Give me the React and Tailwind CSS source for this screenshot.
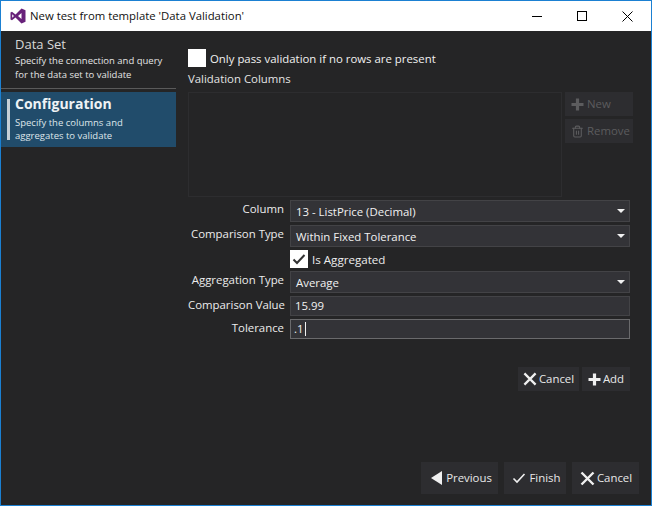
import React from 'react';
import { Trash2 } from 'lucide-react';

const font = { fontFamily: '"Open Sans", "Noto Sans", sans-serif' };

const XIcon = ({ size = 15 }) => (
  <svg width={size} height={size} viewBox="0 0 15 15" className="shrink-0">
    <path d="M1.5 1.5 L13.5 13.5 M13.5 1.5 L1.5 13.5" stroke="#f0f0f0" strokeWidth="2.4" fill="none" />
  </svg>
);

const PlusIcon = ({ color = '#f0f0f0' }) => (
  <svg width="13" height="13" viewBox="0 0 13 13" className="shrink-0">
    <path d="M6.5 0.5 V12.5 M0.5 6.5 H12.5" stroke={color} strokeWidth="3.2" fill="none" />
  </svg>
);

const Check = ({ size = 14, color = '#333', width = 2 }) => (
  <svg width={size} height={size} viewBox="0 0 14 14" className="shrink-0">
    <path d="M1.5 7.5 L5 11 L12.5 3" stroke={color} strokeWidth={width} fill="none" />
  </svg>
);

function FormRow({ label, input = false, className = '', children }) {
  return (
    <div className={`flex items-center ${className}`}>
      <div className={`w-[96px] shrink-0 whitespace-nowrap text-right text-[11.4px] text-[#ececec] ${input ? '-mt-[3px]' : '-mt-[5px]'}`}>{label}</div>
      <div className="ml-[6px] flex-1">{children}</div>
    </div>
  );
}

function Select({ value }) {
  return (
    <div className="flex h-[22px] items-center justify-between border border-[#434346] bg-[#333337] pl-[5px] pr-[3px] text-[11.4px] text-[#f1f1f1]">
      <span className="pt-[1px]">{value}</span>
      <div className="mr-[1px] h-0 w-0 border-x-[4px] border-t-[4px] border-x-transparent border-t-[#f1f1f1]" />
    </div>
  );
}

function ActionButton({ icon, label, className = '' }) {
  return (
    <div className={`flex items-center justify-center gap-[2px] bg-[#2d2d30] text-[11.4px] text-[#e8e8e8] ${className}`}>
      {icon}
      <span>{label}</span>
    </div>
  );
}

export default function App() {
  return (
    <div className="flex h-[506px] w-[652px] flex-col overflow-hidden border border-[#1b80d2] bg-[#252526]" style={font}>
      {/* Title bar */}
      <div className="flex h-[30px] shrink-0 items-center bg-white">
        <svg width="16" height="16" viewBox="0 0 16 16" className="ml-[9px] shrink-0">
          <path d="M11.5 0.5 L15.5 2.2 V13.8 L11.5 15.5 L5.5 9.6 L2 12.3 L0.5 11.5 V4.5 L2 3.7 L5.5 6.4 Z M11.5 5 L8 8 L11.5 11 Z M2.2 6.2 V9.8 L4 8 Z" fill="#68217a" fillRule="evenodd" />
        </svg>
        <span className="ml-[4px] text-[11.35px] text-[#111]">New test from template 'Data Validation'</span>
        <div className="ml-auto flex items-center">
          <div className="mr-[35px] h-[1px] w-[10px] bg-black" />
          <div className="mr-[35px] h-[10px] w-[10px] border border-black" />
          <svg width="11" height="11" viewBox="0 0 11 11" className="mr-[18px]">
            <path d="M0.5 0.5 L10.5 10.5 M10.5 0.5 L0.5 10.5" stroke="#000" fill="none" />
          </svg>
        </div>
      </div>

      <div className="flex min-h-0 flex-1">
        {/* Wizard steps */}
        <div className="w-[175px] shrink-0">
          <div className="h-[58px] border-b border-[#5a5a5a] pl-[14px] pt-[4px]">
            <div className="text-[13px] leading-[18px] text-[#d8d8d8]">Data Set</div>
            <div className="mt-[1px] text-[9.5px] leading-[14px] text-[#e4e4e4]">
              Specify the connection and query
              <br />
              for the data set to validate
            </div>
          </div>
          <div className="mt-[3px] flex h-[55px] items-center bg-[#214c6b] pl-[6px]">
            <div className="h-[41px] w-[3px] bg-[#c8d0d6]" />
            <div className="-mt-[2px] ml-[5px]">
              <div className="-translate-y-[1px] text-[14px] font-bold leading-[18px] text-[#eef2f5]">Configuration</div>
              <div className="mt-[2px] text-[9.5px] leading-[13px] text-[#dfe6ea]">
                Specify the columns and
                <br />
                aggregates to validate
              </div>
            </div>
          </div>
        </div>

        {/* Main panel */}
        <div className="flex min-w-0 flex-1 flex-col pl-[12px] pr-[18px]">
          <div className="mt-[18px] flex h-[18px] items-center">
            <div className="h-[18px] w-[18px] bg-white" />
            <span className="ml-[4px] pt-[2px] text-[11.4px] text-[#f1f1f1]">Only pass validation if no rows are present</span>
          </div>
          <div className="mt-[3px] h-[22px] text-[11.4px] leading-[18px] text-[#e4e4e4]">Validation Columns</div>

          <div className="flex h-[105px] gap-[3px]">
            <div className="w-[374px] border border-[#2d2d2f]" />
            <div className="flex w-[68px] flex-col gap-[3px]">
              <ActionButton className="h-[24px] !justify-start gap-[3px] pl-[6px] !text-[#5c5c5e]" icon={<PlusIcon color="#5c5c5e" />} label="New" />
              <ActionButton className="h-[24px] !justify-start gap-[3px] pl-[6px] !text-[#5c5c5e]" icon={<Trash2 size={13} color="#5c5c5e" />} label="Remove" />
            </div>
          </div>

          <div className="mr-[3px] mt-[3px] flex flex-col">
            <FormRow label="Column"><Select value="13 - ListPrice (Decimal)" /></FormRow>
            <FormRow label="Comparison Type" className="mt-[3px]"><Select value="Within Fixed Tolerance" /></FormRow>
            <div className="ml-[102px] mt-[3px] flex h-[18px] items-center">
              <div className="flex h-[18px] w-[18px] items-center justify-center bg-white">
                <Check />
              </div>
              <span className="ml-[4px] pt-[1px] text-[11.6px] text-[#ececec]">Is Aggregated</span>
            </div>
            <FormRow label="Aggregation Type" className="mt-[3px]"><Select value="Average" /></FormRow>
            <FormRow label="Comparison Value" input className="mt-[3px]">
              <div className="flex h-[20px] items-center border border-[#434346] bg-[#333337] pl-[4px] text-[11.4px] text-[#f1f1f1]">15.99</div>
            </FormRow>
            <FormRow label="Tolerance" input className="mt-[3px]">
              <div className="flex h-[20px] items-center border border-[#6a6a6c] bg-[#333337] pl-[3px] text-[11.4px] text-[#f1f1f1]">
                .1<span className="ml-[1px] h-[14px] w-[1px] bg-[#f1f1f1]" />
              </div>
            </FormRow>
          </div>

          <div className="mr-[3px] mt-[28px] flex justify-end gap-[3px]">
            <ActionButton className="h-[24px] w-[61px]" icon={<XIcon size={14} />} label="Cancel" />
            <ActionButton className="h-[24px] w-[48px]" icon={<PlusIcon />} label="Add" />
          </div>

          <div className="mb-[11px] mr-[-6px] mt-auto flex justify-end gap-[6px]">
            <ActionButton
              className="h-[32px] w-[77px] gap-[4px] pl-[4px]"
              icon={<div className="h-0 w-0 border-y-[7px] border-r-[11px] border-y-transparent border-r-[#f0f0f0]" />}
              label="Previous"
            />
            <ActionButton className="h-[32px] w-[62px] gap-[3px] pl-[3px]" icon={<Check color="#f0f0f0" size={14} width={1.6} />} label="Finish" />
            <ActionButton className="h-[32px] w-[67px] pl-[1px]" icon={<XIcon />} label="Cancel" />
          </div>
        </div>
      </div>
    </div>
  );
}
